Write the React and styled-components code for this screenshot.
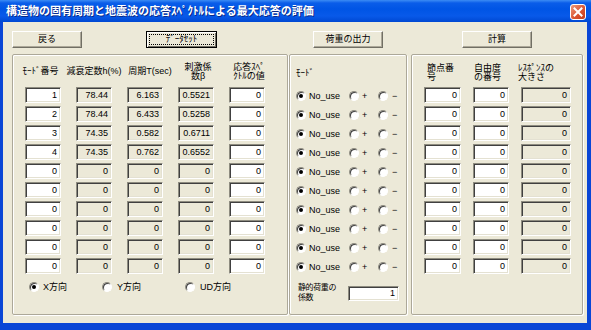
import React from "react";
import styled, { createGlobalStyle } from "styled-components";

const FONT = `"Liberation Sans", "Noto Sans CJK JP", sans-serif`;

const GlobalStyle = createGlobalStyle`
  html, body { margin: 0; padding: 0; background: #fff; }
  body { font-family: ${FONT}; }
  * { box-sizing: border-box; }
`;

const Window = styled.div`
  width: 591px;
  height: 330px;
  background: #0A46D6;
  display: flex;
  flex-direction: column;
  overflow: hidden;
`;

const TitleBar = styled.div`
  height: 22px;
  flex: none;
  display: flex;
  align-items: center;
  justify-content: space-between;
  padding: 0 5px 0 6px;
  background: linear-gradient(#3C8CF4 0, #0A5DE9 3px, #0055E5 9px, #0859E9 16px, #0048D2 22px);
`;

const Title = styled.div`
  color: #fff;
  font: bold 11px/1 ${FONT};
  text-shadow: 1px 1px 0 #0A2A8A;
  white-space: nowrap;
`;

const CloseButton = styled.div`
  width: 16px;
  height: 16px;
  margin-top: 2px;
  border: 1px solid #fff;
  border-radius: 3px;
  background: linear-gradient(135deg, #EE9A7C, #D9512E 60%, #C23E1E);
  display: flex;
  align-items: center;
  justify-content: center;
`;

const Body = styled.div`
  flex: 1;
  margin: 0 4px 7px 3px;
  background: #ECE9D8;
  padding: 9px 0 0 9px;
  display: flex;
  flex-direction: column;
`;

const ButtonRow = styled.div`
  display: flex;
  height: 17px;
`;

const PushButton = styled.div`
  width: ${(p) => p.$w}px;
  height: 17px;
  margin-left: ${(p) => p.$ml || 0}px;
  background: #ECE9D8;
  border: 1px solid;
  border-color: ${(p) => (p.$focused ? "#000" : "#fff #716F64 #716F64 #fff")};
  box-shadow: ${(p) =>
    p.$focused
      ? "inset 1px 1px 0 #fff, inset -1px -1px 0 #716F64"
      : "inset -1px -1px 0 #ACA899"};
  font: 9px/15px ${FONT};
  color: #000;
  text-align: center;
  display: flex;
  align-items: center;
  justify-content: center;
  padding: 2px;
`;

const FocusRect = styled.div`
  width: 100%;
  height: 100%;
  border: 1px dotted #000;
  display: flex;
  align-items: center;
  justify-content: center;
  line-height: 9px;
`;

const GroupRow = styled.div`
  display: flex;
  margin-top: 6px;
  height: 261px;
`;

const Group = styled.div`
  width: ${(p) => p.$w}px;
  margin-left: ${(p) => p.$ml || 0}px;
  height: 100%;
  border: 1px solid #ACA899;
  border-radius: 2px;
  box-shadow: inset 1px 1px 0 #fff, 1px 1px 0 #fff;
  display: flex;
  flex-direction: column;
  padding: ${(p) => p.$pad};
`;

const HeaderGrid = styled.div`
  display: grid;
  grid-template-columns: ${(p) => p.$cols};
  column-gap: ${(p) => p.$gap}px;
  height: 19px;
  align-items: center;
  justify-items: ${(p) => p.$justify || "center"};
`;

const HeaderCell = styled.div`
  font: 9px/9px ${FONT};
  color: #000;
  white-space: nowrap;
  text-align: ${(p) => p.$align || "center"};
  margin-left: ${(p) => p.$shift || 0}px;
`;

const FieldGrid = styled.div`
  display: grid;
  grid-template-columns: ${(p) => p.$cols};
  column-gap: ${(p) => p.$gap}px;
  grid-auto-rows: 16px;
  row-gap: 3px;
  margin-top: ${(p) => p.$mt ?? 6}px;
`;

const Field = styled.div`
  height: ${(p) => p.$h || 16}px;
  width: ${(p) => (p.$w ? `${p.$w}px` : "auto")};
  background: ${(p) => (p.$readOnly ? "#ECE9D8" : "#fff")};
  border: 1px solid;
  border-color: #8E8C80 #fff #fff #8E8C80;
  box-shadow: inset 1px 1px 0 #404040, inset -1px -1px 0 #E4E1D2;
  font: 9px/${(p) => (p.$h || 16) - 2}px ${FONT};
  color: #000;
  text-align: right;
  padding-right: 3px;
`;

const RadioRow = styled.div`
  display: flex;
  align-items: center;
  padding-left: ${(p) => p.$pl || 0}px;
  margin-top: ${(p) => p.$mt || 0}px;
`;

const RadioOption = styled.div`
  display: flex;
  align-items: center;
  width: ${(p) => (p.$w ? `${p.$w}px` : "auto")};
  gap: ${(p) => p.$gap || 3}px;
  font: 9px/1 ${FONT};
  color: #000;
  white-space: nowrap;
`;

const RadioMark = styled.span`
  width: 10px;
  height: 10px;
  border-radius: 50%;
  background: #fff;
  border: 1px solid;
  border-color: #8E8C80 #fff #fff #8E8C80;
  box-shadow: inset 1px 1px 0 #404040;
  display: flex;
  align-items: center;
  justify-content: center;
  flex: none;
  &::after {
    content: "";
    width: 4px;
    height: 4px;
    border-radius: 50%;
    background: ${(p) => (p.$checked ? "#000" : "transparent")};
  }
`;

const ModeList = styled.div`
  display: grid;
  grid-auto-rows: 16px;
  row-gap: 3px;
  margin-top: 10px;
`;

const SmallLabel = styled.div`
  font: ${(p) => p.$size || 9}px/10px ${FONT};
  letter-spacing: ${(p) => p.$ls || 0}px;
  color: #000;
  white-space: nowrap;
`;

const FactorRow = styled.div`
  display: flex;
  align-items: center;
  justify-content: space-between;
  margin-top: 8px;
  padding: 0 7px 0 2px;
`;

const leftRows = [
  ["1", "78.44", "6.163", "0.5521", "0"],
  ["2", "78.44", "6.433", "0.5258", "0"],
  ["3", "74.35", "0.582", "0.6711", "0"],
  ["4", "74.35", "0.762", "0.6552", "0"],
  ...Array.from({ length: 6 }, () => ["0", "0", "0", "0", "0"]),
];

const leftReadOnly = [false, true, true, true, false];

const leftHeaders = [
  { t: "ﾓｰﾄﾞ番号", s: -5 },
  { t: "減衰定数h(%)", s: 0 },
  { t: "周期T(sec)", s: 10 },
  { t: <>刺激係<br />数β</>, s: 4 },
  { t: <>応答ｽﾍﾟ<br />ｸﾄﾙの値</>, s: 4 },
];

const CloseIcon = () => (
  <svg width="10" height="10" viewBox="0 0 10 10">
    <path d="M1.5 1.5 L8.5 8.5 M8.5 1.5 L1.5 8.5" stroke="#fff" strokeWidth="2" strokeLinecap="square" />
  </svg>
);

export default function App() {
  return (
    <>
      <GlobalStyle />
      <Window>
        <TitleBar>
          <Title>構造物の固有周期と地震波の応答ｽﾍﾟｸﾄﾙによる最大応答の評価</Title>
          <CloseButton>
            <CloseIcon />
          </CloseButton>
        </TitleBar>
        <Body>
          <ButtonRow>
            <PushButton $w={70}>戻る</PushButton>
            <PushButton $w={71} $ml={64} $focused>
              <FocusRect>ﾃﾞｰﾀｾｯﾄ</FocusRect>
            </PushButton>
            <PushButton $w={70} $ml={96}>荷重の出力</PushButton>
            <PushButton $w={70} $ml={79}>計算</PushButton>
          </ButtonRow>

          <GroupRow>
            <Group $w={276} $pad="7px 0 0 12px">
              <HeaderGrid $cols="repeat(5, 36px)" $gap={15}>
                {leftHeaders.map((h, i) => (
                  <HeaderCell key={i} $shift={h.s}>{h.t}</HeaderCell>
                ))}
              </HeaderGrid>
              <FieldGrid $cols="repeat(5, 36px)" $gap={15}>
                {leftRows.map((row, r) =>
                  row.map((v, c) => (
                    <Field key={`${r}-${c}`} $readOnly={leftReadOnly[c]}>
                      {v}
                    </Field>
                  ))
                )}
              </FieldGrid>
              <RadioRow $pl={4} $mt={8}>
                <RadioOption $w={73} $gap={4}>
                  <RadioMark $checked />X方向
                </RadioOption>
                <RadioOption $w={83} $gap={5}>
                  <RadioMark />Y方向
                </RadioOption>
                <RadioOption $gap={5}>
                  <RadioMark />UD方向
                </RadioOption>
              </RadioRow>
            </Group>

            <Group $w={118} $ml={1} $pad="13px 0 0 6px">
              <SmallLabel>ﾓｰﾄﾞ</SmallLabel>
              <ModeList>
                {Array.from({ length: 10 }, (_, i) => (
                  <RadioRow key={i}>
                    <RadioOption $w={53} $gap={3}>
                      <RadioMark $checked />No_use
                    </RadioOption>
                    <RadioOption $w={29} $gap={3}>
                      <RadioMark />+
                    </RadioOption>
                    <RadioOption $gap={4}>
                      <RadioMark />−
                    </RadioOption>
                  </RadioRow>
                ))}
              </ModeList>
              <FactorRow>
                <SmallLabel $size={8} $ls={-0.4}>
                  静的荷重の
                  <br />
                  係数
                </SmallLabel>
                <Field $w={51} $h={15}>1</Field>
              </FactorRow>
            </Group>

            <Group $w={172} $ml={4} $pad="8px 0 0 12px">
              <HeaderGrid $cols="37px 36px 50px" $gap={12} $justify="start">
                <HeaderCell $align="left" $shift={3}>節点番<br />号</HeaderCell>
                <HeaderCell $align="left" $shift={1}>自由度<br />の番号</HeaderCell>
                <HeaderCell $align="left" $shift={-3}>ﾚｽﾎﾟﾝｽの<br />大きさ</HeaderCell>
              </HeaderGrid>
              <FieldGrid $cols="37px 36px 50px" $gap={12} $mt={5}>
                {Array.from({ length: 10 }, (_, r) =>
                  [false, false, true].map((ro, c) => (
                    <Field key={`${r}-${c}`} $readOnly={ro}>0</Field>
                  ))
                )}
              </FieldGrid>
            </Group>
          </GroupRow>
        </Body>
      </Window>
    </>
  );
}
